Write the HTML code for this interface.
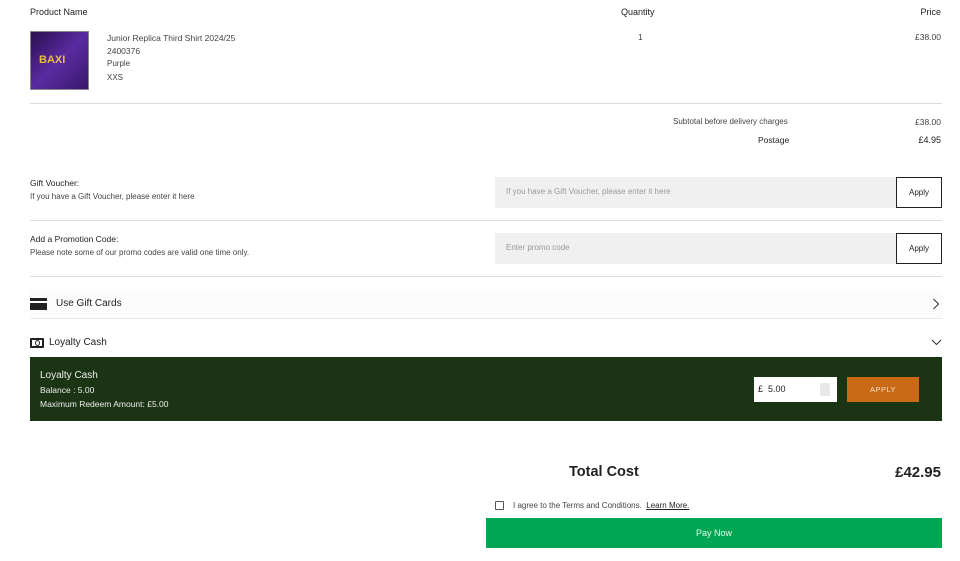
<!DOCTYPE html>
<html><head><meta charset="utf-8"><style>
*{margin:0;padding:0;box-sizing:border-box}
body{width:960px;height:561px;background:#fff;font-family:"Liberation Sans",sans-serif;color:#222;position:relative;overflow:hidden}
.a{position:absolute;white-space:nowrap}
.r{position:absolute;white-space:nowrap;right:19px}
.s{font-size:8.5px;color:#444}
.hr{position:absolute;left:30px;width:912px;height:1px;background:#ddd}
</style></head><body>
<div class="a" style="left:30px;top:7px;font-size:9px">Product Name</div>
<div class="a" style="left:621px;top:7px;font-size:9px">Quantity</div>
<div class="r" style="top:7px;font-size:9px">Price</div>
<div class="a" style="left:30px;top:31px;width:59px;height:59px;background:linear-gradient(135deg,#2a1050,#5a2aa0 50%,#3a1870);border:1px solid #888"><div class="a" style="left:8px;top:22px;color:#e8c040;font-weight:bold;font-size:11px">BAXI</div></div>
<div class="a s" style="left:107px;top:32px;line-height:12.5px">Junior Replica Third Shirt 2024/25<br>2400376<br><span style="font-size:8px">Purple<br>XXS</span></div>
<div class="a s" style="left:638px;top:32px">1</div>
<div class="r s" style="top:32px">£38.00</div>
<div class="hr" style="top:103px"></div>
<div class="a s" style="left:673px;top:117px;font-size:8px">Subtotal before delivery charges</div>
<div class="r s" style="top:117px">£38.00</div>
<div class="a" style="left:758px;top:135px;font-size:8.5px">Postage</div>
<div class="r" style="top:135px;font-size:9px">£4.95</div>
<div class="a" style="left:30px;top:178px;font-size:8.5px">Gift Voucher:</div>
<div class="a" style="left:30px;top:192px;font-size:8px;color:#444">If you have a Gift Voucher, please enter it here</div>
<div class="a" style="left:495px;top:177px;width:401px;height:31px;background:#f0f0f0;font-size:8px;color:#999;padding:10px 11px">If you have a Gift Voucher, please enter it here</div>
<div class="a" style="left:896px;top:177px;width:46px;height:31px;border:1.5px solid #222;font-size:8px;text-align:center;line-height:29px">Apply</div>
<div class="hr" style="top:220px"></div>
<div class="a" style="left:30px;top:234px;font-size:8.5px">Add a Promotion Code:</div>
<div class="a" style="left:30px;top:248px;font-size:8px;color:#444">Please note some of our promo codes are valid one time only.</div>
<div class="a" style="left:495px;top:233px;width:401px;height:31px;background:#f0f0f0;font-size:8px;color:#999;padding:10px 11px">Enter promo code</div>
<div class="a" style="left:896px;top:233px;width:46px;height:31px;border:1.5px solid #222;font-size:8px;text-align:center;line-height:29px">Apply</div>
<div class="hr" style="top:276px"></div>
<div class="a" style="left:30px;top:290px;width:912px;height:28px;background:#fcfcfc"></div>
<div class="a" style="left:30px;top:298px;width:17px;height:12px;background:#222"><div style="margin-top:3px;height:2px;background:#fff"></div></div>
<div class="a" style="left:56px;top:298px;font-size:10px">Use Gift Cards</div>
<svg class="a" style="left:932px;top:298px" width="8" height="12"><path d="M1.5 1L6.5 6L1.5 11" stroke="#333" fill="none"/></svg>
<div class="hr" style="top:318px;background:#e8e8e8"></div>
<div class="a" style="left:30px;top:338px;width:14px;height:10px;border:2px solid #222;border-radius:1px"><div style="margin:0 auto;width:5px;height:6px;border:1.5px solid #222;border-radius:50%"></div></div>
<div class="a" style="left:49px;top:337px;font-size:10px">Loyalty Cash</div>
<svg class="a" style="left:931px;top:339px" width="11" height="7"><path d="M1 1L5.5 5.5L10 1" stroke="#333" fill="none"/></svg>
<div class="a" style="left:30px;top:357px;width:912px;height:64px;background:#1b3414"></div>
<div class="a" style="left:40px;top:370px;font-size:10px;color:#eee">Loyalty Cash</div>
<div class="a" style="left:40px;top:385px;font-size:8.5px;color:#eee">Balance : 5.00</div>
<div class="a" style="left:40px;top:399px;font-size:8.5px;color:#eee">Maximum Redeem Amount: £5.00</div>
<div class="a" style="left:754px;top:377px;width:83px;height:25px;background:#fff;font-size:9px;padding:7px 4px">£&nbsp; 5.00</div>
<div class="a" style="left:820px;top:383px;width:10px;height:13px;background:#e8e8e8;border-radius:2px"></div>
<div class="a" style="left:847px;top:377px;width:72px;height:25px;background:#c96a17;color:#f4e0c8;font-size:7.5px;text-align:center;line-height:25px;letter-spacing:.5px">APPLY</div>
<div class="a" style="left:569px;top:464px;font-size:14.5px;font-weight:bold">Total Cost</div>
<div class="r" style="top:464px;font-size:15px;font-weight:bold">£42.95</div>
<div class="a" style="left:495px;top:501px;width:9px;height:9px;border:1px solid #555;border-radius:1px"></div>
<div class="a" style="left:513px;top:501px;font-size:8px;color:#444">I agree to the Terms and Conditions. &nbsp;<span style="text-decoration:underline;color:#222">Learn More.</span></div>
<div class="a" style="left:486px;top:518px;width:456px;height:30px;background:#00a651;color:#e8f8ee;font-size:9px;text-align:center;line-height:30px">Pay Now</div>
</body></html>
